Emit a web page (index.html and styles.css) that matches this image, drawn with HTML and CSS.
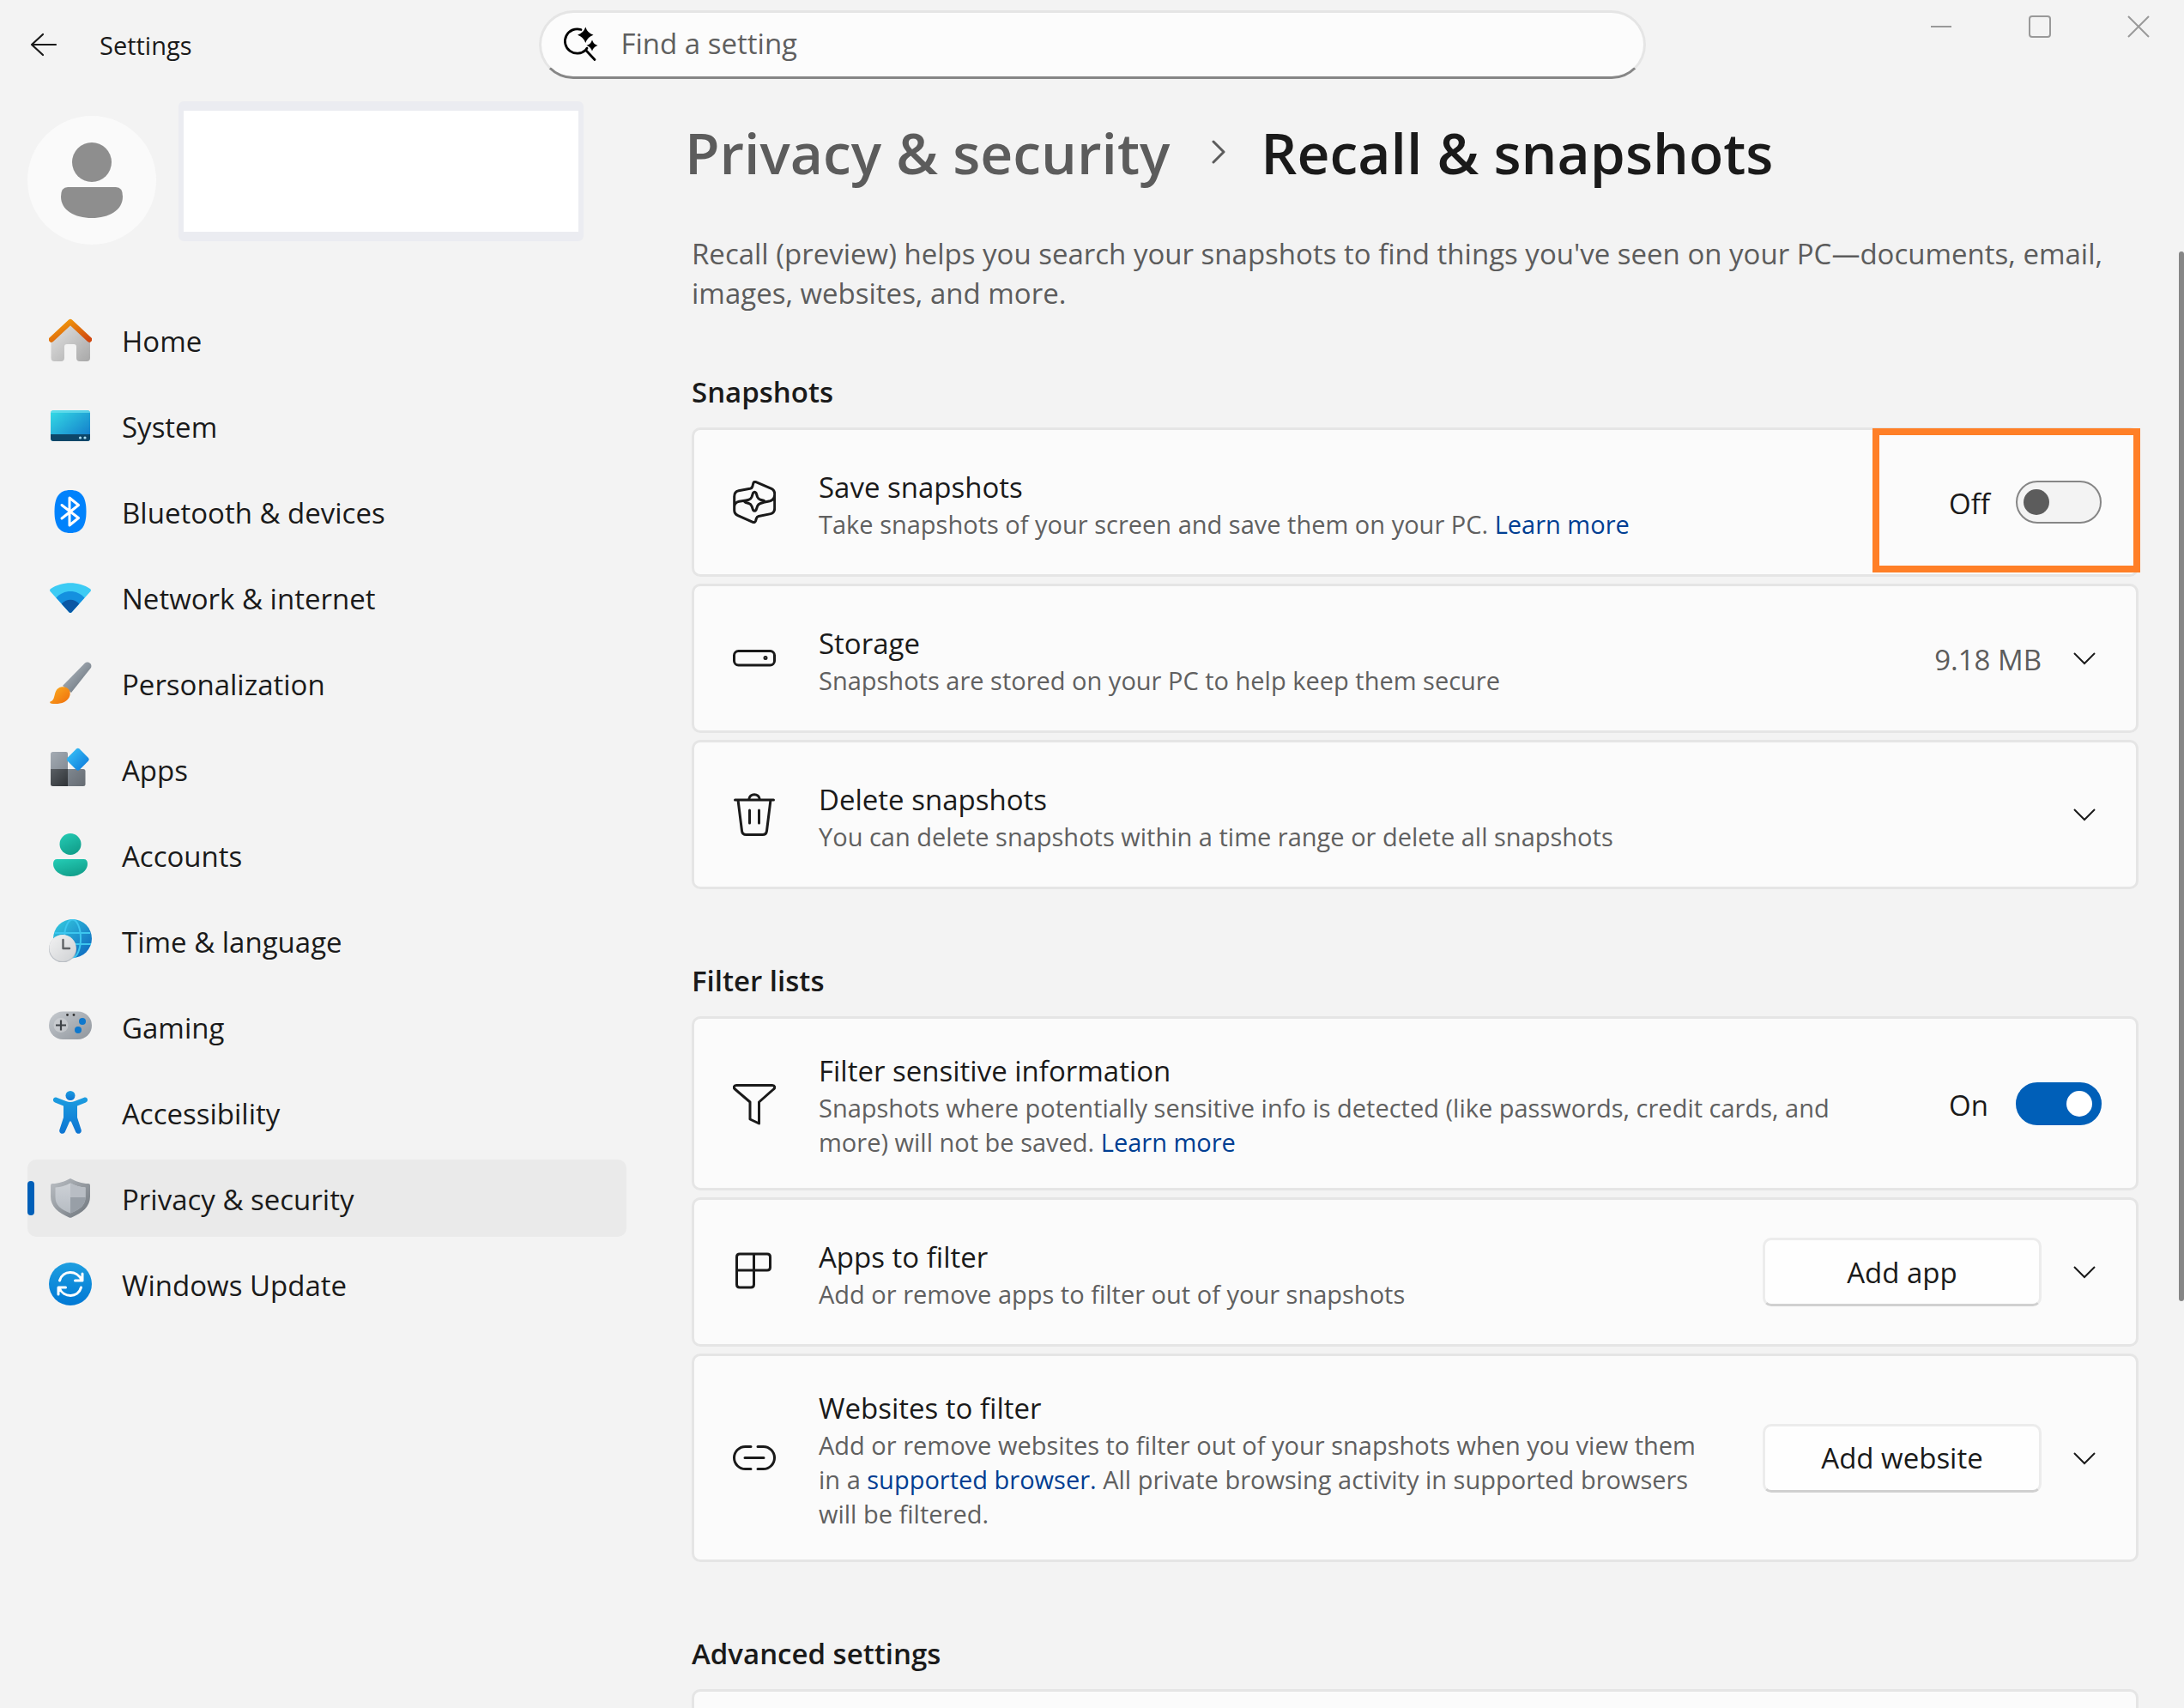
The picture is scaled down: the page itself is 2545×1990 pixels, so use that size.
FILE: index.html
```html
<!DOCTYPE html>
<html lang="en">
<head>
  <meta charset="UTF-8" />
  <title>Settings</title>
  <link rel="stylesheet" href="styles.css">
</head>
<body>

  <header class="titlebar">
    <div class="titlebar-left">
      <button class="icon-btn" aria-label="Back">
        <svg width="32" height="28" viewBox="0 0 32 28" fill="none" stroke="#1a1a1a" stroke-width="2.2" stroke-linecap="round" stroke-linejoin="round"><path d="M15 2 2 14l13 12M2 14h28"/></svg>
      </button>
      <span class="app-name">Settings</span>
    </div>

    <label class="search">
      <svg width="42" height="42" viewBox="0 0 42 42" fill="none"><path d="M21 3.500A14.200 14.200 0 1 0 26.500 27.200L37 38.500M26.500 27.200l1.500-2" stroke="#000" stroke-width="2.800" stroke-linecap="round"/><path d="M26.300.5Q28.500 7.500 35.500 9.700Q28.500 12 26.300 19Q24 12 17 9.700Q24 7.500 26.300.5Z" fill="#000"/><path d="M34 15.500Q35.500 20.500 40.500 22Q35.500 23.500 34 28.500Q32.500 23.500 27.500 22Q32.500 20.500 34 15.500Z" fill="#000"/></svg>
      <input type="text" placeholder="Find a setting" aria-label="Find a setting">
    </label>

    <div class="window-controls">
      <button class="icon-btn" aria-label="Minimize"><svg width="26" height="26" viewBox="0 0 26 26" stroke="#999" stroke-width="2"><path d="M1 13h24"/></svg></button>
      <button class="icon-btn" aria-label="Maximize"><svg width="26" height="26" viewBox="0 0 26 26" fill="none" stroke="#999" stroke-width="2"><rect x="1" y="1" width="24" height="24" rx="3"/></svg></button>
      <button class="icon-btn" aria-label="Close"><svg width="26" height="26" viewBox="0 0 26 26" stroke="#999" stroke-width="2"><path d="M1 1 25 25M25 1 1 25"/></svg></button>
    </div>
  </header>

  <div class="layout">
    <aside class="sidebar">
      <div class="profile">
        <svg class="avatar" width="150" height="150" viewBox="0 0 150 150"><circle cx="75" cy="75" r="75" fill="#fafafa"/><circle cx="75" cy="54" r="23" fill="#8e8e8e"/><path d="M47 83h56q8 0 8 11c0 16-16 25-36 25s-36-9-36-25q0-11 8-11z" fill="#8e8e8e"/></svg>
        <div class="profile-name"></div>
      </div>

      <nav class="nav">
        <a href="#" class="nav-item">
          <svg viewBox="0 0 50 50">
            <defs>
              <linearGradient id="homeWall" x1="0" y1="0" x2="1" y2="1"><stop offset="0" stop-color="#e4e4e4"/><stop offset="1" stop-color="#a8a8a8"/></linearGradient>
              <linearGradient id="homeRoof" x1="0" y1="0" x2="1" y2="1"><stop offset="0" stop-color="#f5a30a"/><stop offset="1" stop-color="#d04710"/></linearGradient>
            </defs>
            <path d="M25 6 2.500 27v19q0 4 4 4H14q4 0 4-4V33q0-3 3-3h8q3 0 3 3v13q0 4 4 4h8q4 0 4-4V27z" fill="url(#homeWall)"/>
            <path d="M3 24.500 25 4 47 24.500" fill="none" stroke="url(#homeRoof)" stroke-width="6.400" stroke-linecap="round" stroke-linejoin="round"/>
          </svg>
          <span>Home</span>
        </a>
        <a href="#" class="nav-item">
          <svg viewBox="0 0 50 50">
            <defs><linearGradient id="screen" x1="0" y1="0" x2="1" y2="1"><stop offset="0" stop-color="#35dde6"/><stop offset="1" stop-color="#1074c8"/></linearGradient></defs>
            <rect x="2" y="7" width="46" height="36" rx="3.500" fill="url(#screen)"/>
            <path d="M5.500 7h39Q48 7 48 10H2q0-3 3.500-3z" fill="#6ddfee" opacity=".7"/>
            <path d="M2 35h46v4.500q0 3.500-3.500 3.500h-39Q2 43 2 39.500z" fill="#0d4668"/>
            <circle cx="36.500" cy="39" r="1.600" fill="#a8dcf0"/><circle cx="42" cy="39" r="1.600" fill="#a8dcf0"/>
          </svg>
          <span>System</span>
        </a>
        <a href="#" class="nav-item">
          <svg viewBox="0 0 50 50">
            <path d="M25 0c13 0 18.500 8 18.500 25S38 50 25 50 6.500 42 6.500 25 12 0 25 0z" fill="#0082fc"/>
            <path d="M15 17.500 34.500 32.500 24 41V9L34.500 17.500 15 33" fill="none" stroke="#fff" stroke-width="3" stroke-linecap="round" stroke-linejoin="round"/>
          </svg>
          <span>Bluetooth &amp; devices</span>
        </a>
        <a href="#" class="nav-item">
          <svg viewBox="0 0 50 50">
            <path d="M1.500 18C0.800 17 .8 16 2 15 15 6 35 6 48 15c1.200 1 1.200 2 .5 3L26.500 42.300q-1.500 1.500-3 0z" fill="#3ccbf4"/>
            <path d="M8.500 25.500C17 15.500 33 15.500 41.500 25.500L26.500 42.300q-1.500 1.500-3 0z" fill="#1490df"/>
            <path d="M14.800 32.500C20 26 30 26 35.200 32.500L26.500 42.300q-1.500 1.500-3 0z" fill="#0a57a4"/>
          </svg>
          <span>Network &amp; internet</span>
        </a>
        <a href="#" class="nav-item">
          <svg viewBox="0 0 50 50">
            <defs>
              <linearGradient id="handle" x1="0" y1="0" x2="1" y2="1"><stop offset=".2" stop-color="#a9b1b9"/><stop offset="1" stop-color="#5c6670"/></linearGradient>
              <linearGradient id="bristle" x1="0" y1="0" x2="1" y2="1"><stop offset="0" stop-color="#fbb021"/><stop offset="1" stop-color="#ef6c0c"/></linearGradient>
            </defs>
            <path d="M42 1.500c3-2.500 9 .5 7 5.500L26 36 16 28z" fill="url(#handle)"/>
            <path d="M1.500 46.500C9 45 4 32 14 29.500 21 28 26 33 24.500 39 22 49 9 50 2 48.500q-1.500-1-.5-2z" fill="url(#bristle)"/>
          </svg>
          <span>Personalization</span>
        </a>
        <a href="#" class="nav-item">
          <svg viewBox="0 0 50 50">
            <defs>
              <linearGradient id="tileA" x1="0" y1="0" x2="1" y2="1"><stop offset="0" stop-color="#a4abb3"/><stop offset="1" stop-color="#848c95"/></linearGradient>
              <linearGradient id="tileB" x1="0" y1="0" x2="1" y2="1"><stop offset="0" stop-color="#5a5f64"/><stop offset="1" stop-color="#2f3337"/></linearGradient>
              <linearGradient id="tileC" x1="0" y1="0" x2="1" y2="1"><stop offset="0" stop-color="#7f878f"/><stop offset="1" stop-color="#656b72"/></linearGradient>
              <linearGradient id="tileD" x1="0" y1="0" x2="1" y2="1"><stop offset="0" stop-color="#3cc8fa"/><stop offset="1" stop-color="#0a74d8"/></linearGradient>
            </defs>
            <path d="M4.500 5H20q2 0 2 2v18H2V7.500Q2 5 4.500 5z" fill="url(#tileA)"/>
            <path d="M2 25h20v20H4.500Q2 45 2 42.500z" fill="url(#tileB)"/>
            <path d="M22 25h18q2.500 0 2.500 2.500v15q0 2.500-2.500 2.500H22z" fill="url(#tileC)"/>
            <path d="M32 1.500q1.800-1.500 3.600 0L46 12q1.600 1.700 0 3.500L35.600 26q-1.800 1.500-3.600 0L21.500 15.500q-1.500-1.800 0-3.500z" fill="url(#tileD)"/>
          </svg>
          <span>Apps</span>
        </a>
        <a href="#" class="nav-item">
          <svg viewBox="0 0 50 50">
            <defs><linearGradient id="person" x1="0" y1="0" x2=".5" y2="1"><stop offset="0" stop-color="#25cdb6"/><stop offset="1" stop-color="#12a08c"/></linearGradient></defs>
            <circle cx="25" cy="12.500" r="12.500" fill="url(#person)"/>
            <path d="M9.500 30h31q4.500 0 4.500 5.500C45 44 36 50 25 50S5 44 5 35.500Q5 30 9.500 30z" fill="url(#person)"/>
          </svg>
          <span>Accounts</span>
        </a>
        <a href="#" class="nav-item">
          <svg viewBox="0 0 50 50">
            <defs>
              <linearGradient id="globe" x1="0" y1="0" x2="1" y2="1"><stop offset="0" stop-color="#36cfe0"/><stop offset="1" stop-color="#0b62be"/></linearGradient>
              <linearGradient id="clock" x1="0" y1="0" x2="1" y2="1"><stop offset="0" stop-color="#f2f2f2"/><stop offset="1" stop-color="#cfd1d4"/></linearGradient>
            </defs>
            <circle cx="27.500" cy="22.500" r="22.500" fill="url(#globe)"/>
            <g fill="none" stroke="#3dc6ee" stroke-width="2"><path d="M7 16h41M6 29h43"/><ellipse cx="27.500" cy="22.500" rx="9.500" ry="22"/></g>
            <circle cx="16" cy="34.500" r="16" fill="#b9bec4"/>
            <circle cx="16" cy="33.500" r="15.500" fill="url(#clock)"/>
            <path d="M16.500 24v10H24" fill="none" stroke="#5f6265" stroke-width="2.400" stroke-linecap="round" stroke-linejoin="round"/>
          </svg>
          <span>Time &amp; language</span>
        </a>
        <a href="#" class="nav-item">
          <svg viewBox="0 0 50 50">
            <defs><linearGradient id="pad" x1="0" y1="0" x2="1" y2="1"><stop offset="0" stop-color="#c6cacf"/><stop offset="1" stop-color="#8f959c"/></linearGradient></defs>
            <rect x="0" y="7.500" width="50" height="32.500" rx="16.250" fill="url(#pad)"/>
            <circle cx="14" cy="23.500" r="8.500" fill="#d3d6d9" opacity=".6"/>
            <path d="M14 17.500v12M8 23.500h12" stroke="#3e4247" stroke-width="2.200"/>
            <circle cx="21.500" cy="11.500" r="1.400" fill="#333"/><circle cx="29" cy="11.500" r="1.400" fill="#333"/>
            <circle cx="39" cy="19" r="4" fill="#0f78cd"/><circle cx="34" cy="29" r="4" fill="#0f78cd"/>
          </svg>
          <span>Gaming</span>
        </a>
        <a href="#" class="nav-item">
          <svg viewBox="0 0 50 50">
            <defs><linearGradient id="figure" x1="0" y1="0" x2="0" y2="1"><stop offset="0" stop-color="#1c9de0"/><stop offset="1" stop-color="#0c74d2"/></linearGradient></defs>
            <circle cx="25" cy="5.500" r="5.500" fill="url(#figure)"/>
            <path d="M9 7.800 20 12q5 1.800 10 0L41 7.800c4-1.200 5.800 4 2 5.700L33 17.500V31l4.700 14.500c1 4-4.600 6-6.400 2.500L26 36q-1-1.500-2 0l-5.300 12c-1.800 3.500-7.400 1.500-6.400-2.500L17 31V17.500L7 13.500C3.200 11.800 5 6.600 9 7.800z" fill="url(#figure)"/>
          </svg>
          <span>Accessibility</span>
        </a>
        <a href="#" class="nav-item active" aria-current="page">
          <svg viewBox="0 0 50 50">
            <defs>
              <linearGradient id="shieldOut" x1="0" y1="0" x2="1" y2="1"><stop offset="0" stop-color="#bcc0c5"/><stop offset="1" stop-color="#6d747b"/></linearGradient>
              <linearGradient id="shieldIn" x1="0" y1="0" x2="0" y2="1"><stop offset="0" stop-color="#cdd1d6"/><stop offset="1" stop-color="#b6bcc3"/></linearGradient>
            </defs>
            <path d="M25 2c7 3.500 13 6 21 6q2 0 2 2v13c0 12-9 19-21.500 24.500q-1.500.7-3 0C11 42 2 35 2 23V10q0-2 2-2c8 0 14-2.500 21-6z" fill="url(#shieldOut)"/>
            <path d="M25 7.500c6 3 11 4.700 17.500 5V24c0 9-6 14-17.500 18.500C13.500 38 7.500 33 7.500 24V12.500C14 12.200 19 10.500 25 7.500z" fill="url(#shieldIn)"/>
            <path d="M25 7.500c6 3 11 4.700 17.500 5V24H25z" fill="#b8bdc4"/>
            <path d="M25 24h17.500c0 9-6 14-17.500 18.500z" fill="#989fa7"/>
          </svg>
          <span>Privacy &amp; security</span>
        </a>
        <a href="#" class="nav-item">
          <svg viewBox="0 0 50 50">
            <defs><linearGradient id="update" x1="0" y1="0" x2="0" y2="1"><stop offset="0" stop-color="#1e9ee0"/><stop offset="1" stop-color="#0078d4"/></linearGradient></defs>
            <circle cx="25" cy="25" r="25" fill="url(#update)"/>
            <path d="M12.500 21C16 8.500 33 8.500 38 20.500M39 13v8h-8.500M37.500 29C34 41.500 17 41.500 12 29.500M11 37v-8h8.500" fill="none" stroke="#fff" stroke-width="3" stroke-linecap="round" stroke-linejoin="round"/>
          </svg>
          <span>Windows Update</span>
        </a>
      </nav>
    </aside>

    <main class="content">
      <h1 class="breadcrumb">
        <a href="#">Privacy &amp; security</a>
        <svg width="26" height="28" viewBox="-8 0 26 28" fill="none" stroke="#5c5c5c" stroke-width="3" stroke-linecap="round" stroke-linejoin="round"><path d="M3 2 15 14 3 26"/></svg>
        <span>Recall &amp; snapshots</span>
      </h1>
      <p class="intro">Recall (preview) helps you search your snapshots to find things you've seen on your PC—documents, email, images, websites, and more.</p>

      <h2>Snapshots</h2>
      <div class="card">
        <svg class="card-icon" viewBox="0 0 50 50"><path d="M1.700 30V18.500C1.700 14 3.500 12.300 6.700 11.700L20 9.300q2.300-.5 2.800-2.300L23.800 3q.8-2.200 3.200-1.400L45 9.400q3.700 1.800 3.700 6.100v16.500c0 4-1.700 6-4.500 6.600L30 41.500q-2 .5-2.500 2.300L26.500 47q-.8 2.200-3.200 1.400L5.800 40.600Q1.700 38.700 1.700 34.500V30q.5-4.700 5.500-5.800l6.500-1M48.700 17q-.5 5.500-5.500 6.800l-6 1.200M23.500 14.500q1.800-2.500 3.600 0l1.500 4.500q1 2.500 3.500 3.200l4 1.100q1.800 1 0 2l-4 1.200q-2.500.8-3.500 3.200l-1.500 4.300q-1.800 2.500-3.600 0l-1.500-4.300q-1-2.500-3.500-3.200l-4-1.200q-1.800-1 0-2l4-1.100q2.500-.7 3.500-3.200z"/></svg>
        <div class="card-text">
          <h3>Save snapshots</h3>
          <p>Take snapshots of your screen and save them on your PC. <a href="#">Learn more</a></p>
        </div>
        <label class="toggle"><span>Off</span><input type="checkbox" role="switch" aria-label="Save snapshots"></label>
        <div class="highlight"></div>
      </div>
      <div class="card">
        <svg class="card-icon" viewBox="0 0 50 50"><rect x="1.500" y="16.500" width="47" height="16.500" rx="5"/><circle cx="38" cy="24.500" r="1"/></svg>
        <div class="card-text">
          <h3>Storage</h3>
          <p>Snapshots are stored on your PC to help keep them secure</p>
        </div>
        <span class="value">9.18 MB</span>
        <button class="icon-btn expand" aria-label="Expand storage"><svg width="28" height="16" viewBox="0 0 28 16"><path d="M2 2 14 14 26 2"/></svg></button>
      </div>
      <div class="card">
        <svg class="card-icon" viewBox="0 0 50 50"><path d="M2.500 8h45M6 8l4.500 36q.5 4.500 5 4.500h19q4.500 0 5-4.500L44 8M18.500 8c1-8.500 12-8.500 13 0M19.500 20v15M30.500 20v15"/></svg>
        <div class="card-text">
          <h3>Delete snapshots</h3>
          <p>You can delete snapshots within a time range or delete all snapshots</p>
        </div>
        <button class="icon-btn expand" aria-label="Expand delete snapshots"><svg width="28" height="16" viewBox="0 0 28 16"><path d="M2 2 14 14 26 2"/></svg></button>
      </div>

      <h2>Filter lists</h2>
      <div class="card">
        <svg class="card-icon" viewBox="0 0 50 50"><path d="M4 3.500h42c3 0 3.500 3 1.500 4.500L30.500 23v25L20 43V23L2.500 8C.5 6.500 1 3.500 4 3.500z"/></svg>
        <div class="card-text">
          <h3>Filter sensitive information</h3>
          <p>Snapshots where potentially sensitive info is detected (like passwords, credit cards, and more) will not be saved. <a href="#">Learn more</a></p>
        </div>
        <label class="toggle"><span>On</span><input type="checkbox" role="switch" aria-label="Filter sensitive information" checked></label>
      </div>
      <div class="card">
        <svg class="card-icon" viewBox="0 0 50 50"><path d="M8 4h32q3.500 0 3.500 3.500v12q0 3.500-3.500 3.500H4.500M24.500 4v35.500q0 3.500-3.500 3.500H8q-3.500 0-3.500-3.500v-32Q4.500 4 8 4"/></svg>
        <div class="card-text">
          <h3>Apps to filter</h3>
          <p>Add or remove apps to filter out of your snapshots</p>
        </div>
        <button class="btn">Add app</button>
        <button class="icon-btn expand" aria-label="Expand apps to filter"><svg width="28" height="16" viewBox="0 0 28 16"><path d="M2 2 14 14 26 2"/></svg></button>
      </div>
      <div class="card">
        <svg class="card-icon" viewBox="0 0 50 50"><path d="M21 11.500h-6.500a13 13 0 0 0 0 26H21M29 11.500h6.500a13 13 0 0 1 0 26H29M14 24.500h22"/></svg>
        <div class="card-text">
          <h3>Websites to filter</h3>
          <p>Add or remove websites to filter out of your snapshots when you view them in a <a href="#">supported browser.</a> All private browsing activity in supported browsers will be filtered.</p>
        </div>
        <button class="btn">Add website</button>
        <button class="icon-btn expand" aria-label="Expand websites to filter"><svg width="28" height="16" viewBox="0 0 28 16"><path d="M2 2 14 14 26 2"/></svg></button>
      </div>

      <h2>Advanced settings</h2>
      <div class="card"></div>
    </main>
  </div>

  <div class="scroll-thumb"></div>

</body>
</html>
```
FILE: styles.css
```css
* { box-sizing: border-box; }

html, body {
  margin: 0; padding: 0;
  height: 100%;
  overflow: hidden;
}
body {
  background: #f3f3f3;
  color: #1a1a1a;
  font-family: "Segoe UI", "Open Sans", "Noto Sans", sans-serif;
  font-size: 33px;
  line-height: 47px;
}
svg { display: block; flex: none; }
h1, h2, h3, p { margin: 0; font-size: inherit; font-weight: 400; }
a { color: #003e92; text-decoration: none; }

.icon-btn {
  display: flex; align-items: center; justify-content: center;
  padding: 0;
  border: none;
  background: none;
  cursor: pointer;
}

/* title bar */
.titlebar {
  display: grid;
  grid-template-columns: 1fr minmax(0, 1290px) 1fr;
  align-items: start;
  padding-top: 12px;
}
.titlebar-left {
  display: flex; align-items: center;
  gap: 49px;
  height: 80px;
  padding-left: 35px;
}
.app-name { font-size: 29px; }

.search {
  display: flex; align-items: center;
  gap: 26px;
  height: 80px;
  padding: 0 25px;
  background: #fcfcfc;
  border: 3px solid #e5e5e5;
  border-bottom-color: #868686;
  border-radius: 40px;
}
.search input {
  flex: 1;
  padding: 0 0 3px;
  border: none; outline: none;
  background: none;
  font: inherit;
  color: #1a1a1a;
}
.search input::placeholder { color: #5f5f5f; opacity: 1; }

.window-controls {
  display: flex; justify-content: flex-end;
  gap: 89px;
  padding: 6px 40px 0 0;
}

.layout {
  display: grid;
  grid-template-columns: 698px minmax(0, 1fr);
  gap: 76px;
  padding: 26px 53px 0 32px;
}

/* sidebar */
.profile {
  display: flex;
  align-items: flex-start;
  gap: 26px;
  height: 218px;
}
.avatar { margin-top: 17px; }
.profile-name {
  width: 472px; height: 163px;
  background: #fff;
  border: solid #ebecf1;
  border-width: 11px 6px;
  border-radius: 6px;
}

.nav {
  display: flex; flex-direction: column;
  gap: 10px;
  padding-top: 15px;
}
.nav-item {
  display: flex; align-items: center;
  gap: 35px;
  height: 90px;
  padding-left: 25px;
  border-radius: 10px;
  color: #1a1a1a;
}
.nav-item svg { width: 50px; height: 50px; }
.nav-item.active {
  position: relative;
  background: #eaeaea;
}
.nav-item.active::before {
  content: "";
  position: absolute;
  left: 0; top: 25px;
  width: 8px; height: 40px;
  border-radius: 4px;
  background: #005fb8;
}

/* labels sit slightly below the icon centre */
.nav-item span, .toggle span, .value { padding-top: 3px; }

/* main column */
.breadcrumb {
  display: flex; align-items: center;
  gap: 40px;
  margin-left: -8px;
  padding-top: 13px;
  font-size: 66px;
  font-weight: 600;
  line-height: 92px;
}
.breadcrumb a { color: #5c5c5c; }
.intro {
  padding-top: 50px;
  color: #5c5c5c;
  line-height: 46px;
}
.content h2 {
  margin: 83px 0 18px;
  font-weight: 600;
}
.content .intro + h2 { margin-top: 68px; }

.card {
  position: relative;
  display: flex; align-items: center;
  min-height: 174px;
  margin-bottom: 8px;
  padding: 33px 40px 33px 45px;
  background: #fbfbfb;
  border: 3px solid #e5e5e5;
  border-radius: 10px;
}
.card-icon {
  width: 50px; height: 50px;
  margin-right: 50px;
  fill: none;
  stroke: #1a1a1a;
  stroke-width: 3;
  stroke-linecap: round;
  stroke-linejoin: round;
}
.card-text { flex: 1; padding-top: 4px; }
.card-text p {
  color: #606060;
  font-size: 29px;
  line-height: 40px;
}

.toggle {
  display: flex; align-items: center;
  margin-left: 80px;
}
.toggle span { width: 78px; }
.toggle input {
  appearance: none;
  width: 100px; height: 50px;
  margin: 0;
  padding: 7px;
  border: 2px solid #868686;
  border-radius: 25px;
  background: #f3f3f3;
}
.toggle input::before {
  content: "";
  display: block;
  width: 30px; height: 30px;
  margin-top: 1px;
  border-radius: 50%;
  background: #5c5c5c;
}
.toggle input:checked { background: #005fb8; border-color: #005fb8; }
.toggle input:checked::before { margin-left: 50px; background: #fff; }

.highlight {
  position: absolute;
  top: -2px; right: -5px;
  width: 312px; height: 168px;
  border: 8px solid #ff7f27;
}

.value { color: #5c5c5c; }
.expand { width: 60px; height: 60px; margin-left: 20px; margin-right: -10px; }
.expand path {
  fill: none;
  stroke: #1a1a1a;
  stroke-width: 2;
}
.btn {
  width: 325px; height: 80px;
  margin-left: 60px;
  border: 3px solid #ececec;
  border-bottom-color: #d0d0d0;
  border-radius: 10px;
  background: #fefefe;
  color: #1a1a1a;
  font: inherit;
}

.scroll-thumb {
  position: fixed;
  top: 293px; right: 0;
  width: 6px; height: 1223px;
  border-radius: 3px;
  background: #868686;
}
```
